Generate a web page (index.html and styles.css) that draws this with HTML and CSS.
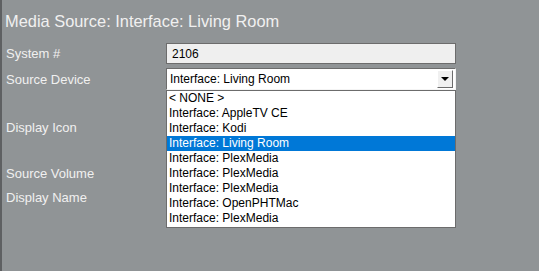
FILE: index.html
```html
<!DOCTYPE html>
<html lang="en">
<head>
  <meta charset="UTF-8">
  <title>Media Source</title>
  <link rel="stylesheet" href="styles.css">
</head>
<body>

<div id="panel">
  <div class="title">Media Source: Interface: Living Room</div>
  <div class="form">
    <label class="row-label">System #</label>
    <div class="field text-field">2106</div>

    <label class="row-label">Source Device</label>
    <div class="combo">
      <div class="field combo-box">
        <span>Interface: Living Room</span>
        <span class="combo-btn"><span class="arrow"></span></span>
      </div>
      <ul class="combo-list">
        <li>&lt; NONE &gt;</li>
        <li>Interface: AppleTV CE</li>
        <li>Interface: Kodi</li>
        <li class="selected">Interface: Living Room</li>
        <li>Interface: PlexMedia</li>
        <li>Interface: PlexMedia</li>
        <li>Interface: PlexMedia</li>
        <li>Interface: OpenPHTMac</li>
        <li>Interface: PlexMedia</li>
      </ul>
    </div>

    <label class="row-label">Display Icon</label>
    <div></div>

    <label class="row-label">Source Volume</label>
    <div></div>

    <label class="row-label">Display Name</label>
    <div></div>
  </div>
</div>

</body>
</html>
```

FILE: styles.css
```css
body {
  margin: 0;
  font-family: "Liberation Sans", Arial, sans-serif;
  background-color: #909496;
}

#panel {
  height: 271px;
  box-sizing: border-box;
  border-left: 2px solid #5e6062;
  background-color: #909496;
  color: #f0f0f0;
}

.title {
  font-size: 16.4px;
  line-height: 20px;
  padding: 11px 0 0 3px;
  height: 32px;
}

.form {
  display: grid;
  grid-template-columns: 160px 290px;
  grid-template-rows: 21px 22px 66px 18px 22px;
  row-gap: 4px;
  align-items: center;
  padding-left: 4px;
}

.row-label {
  font-size: 13px;
}

.field {
  box-sizing: border-box;
  height: 100%;
  font-size: 12px;
  color: #000000;
  display: flex;
  align-items: center;
}

.text-field {
  background-color: #efefef;
  border: 1px solid #6c6c6c;
  padding-left: 5px;
}

.combo {
  position: relative;
  height: 100%;
}

.combo-box {
  background-color: #ffffff;
  border-top: 1px solid #6c6c6c;
  border-left: 1px solid #6c6c6c;
  border-right: 1px solid #f4f4f4;
  border-bottom: 1px solid #f4f4f4;
  padding-left: 3px;
  justify-content: space-between;
}

.combo-btn {
  width: 16px;
  height: 18px;
  margin-right: 2px;
  box-sizing: border-box;
  background-color: #f0f0f0;
  border-top: 1px solid #ffffff;
  border-left: 1px solid #ffffff;
  border-right: 1px solid #6c6c6c;
  border-bottom: 1px solid #6c6c6c;
  display: flex;
  align-items: center;
  justify-content: center;
}

.arrow {
  width: 0;
  height: 0;
  border-left: 4px solid transparent;
  border-right: 4px solid transparent;
  border-top: 4px solid #000000;
}

.combo-list {
  position: absolute;
  top: 100%;
  left: 0;
  width: 290px;
  box-sizing: border-box;
  margin: 0;
  padding: 0 0 1px 0;
  list-style: none;
  background-color: #ffffff;
  border: 1px solid #6c6c6c;
  font-size: 12px;
  color: #000000;
}

.combo-list li {
  height: 15px;
  line-height: 15px;
  padding-left: 2px;
}

.combo-list .selected {
  background-color: #0078d7;
  color: #ffffff;
}
```
